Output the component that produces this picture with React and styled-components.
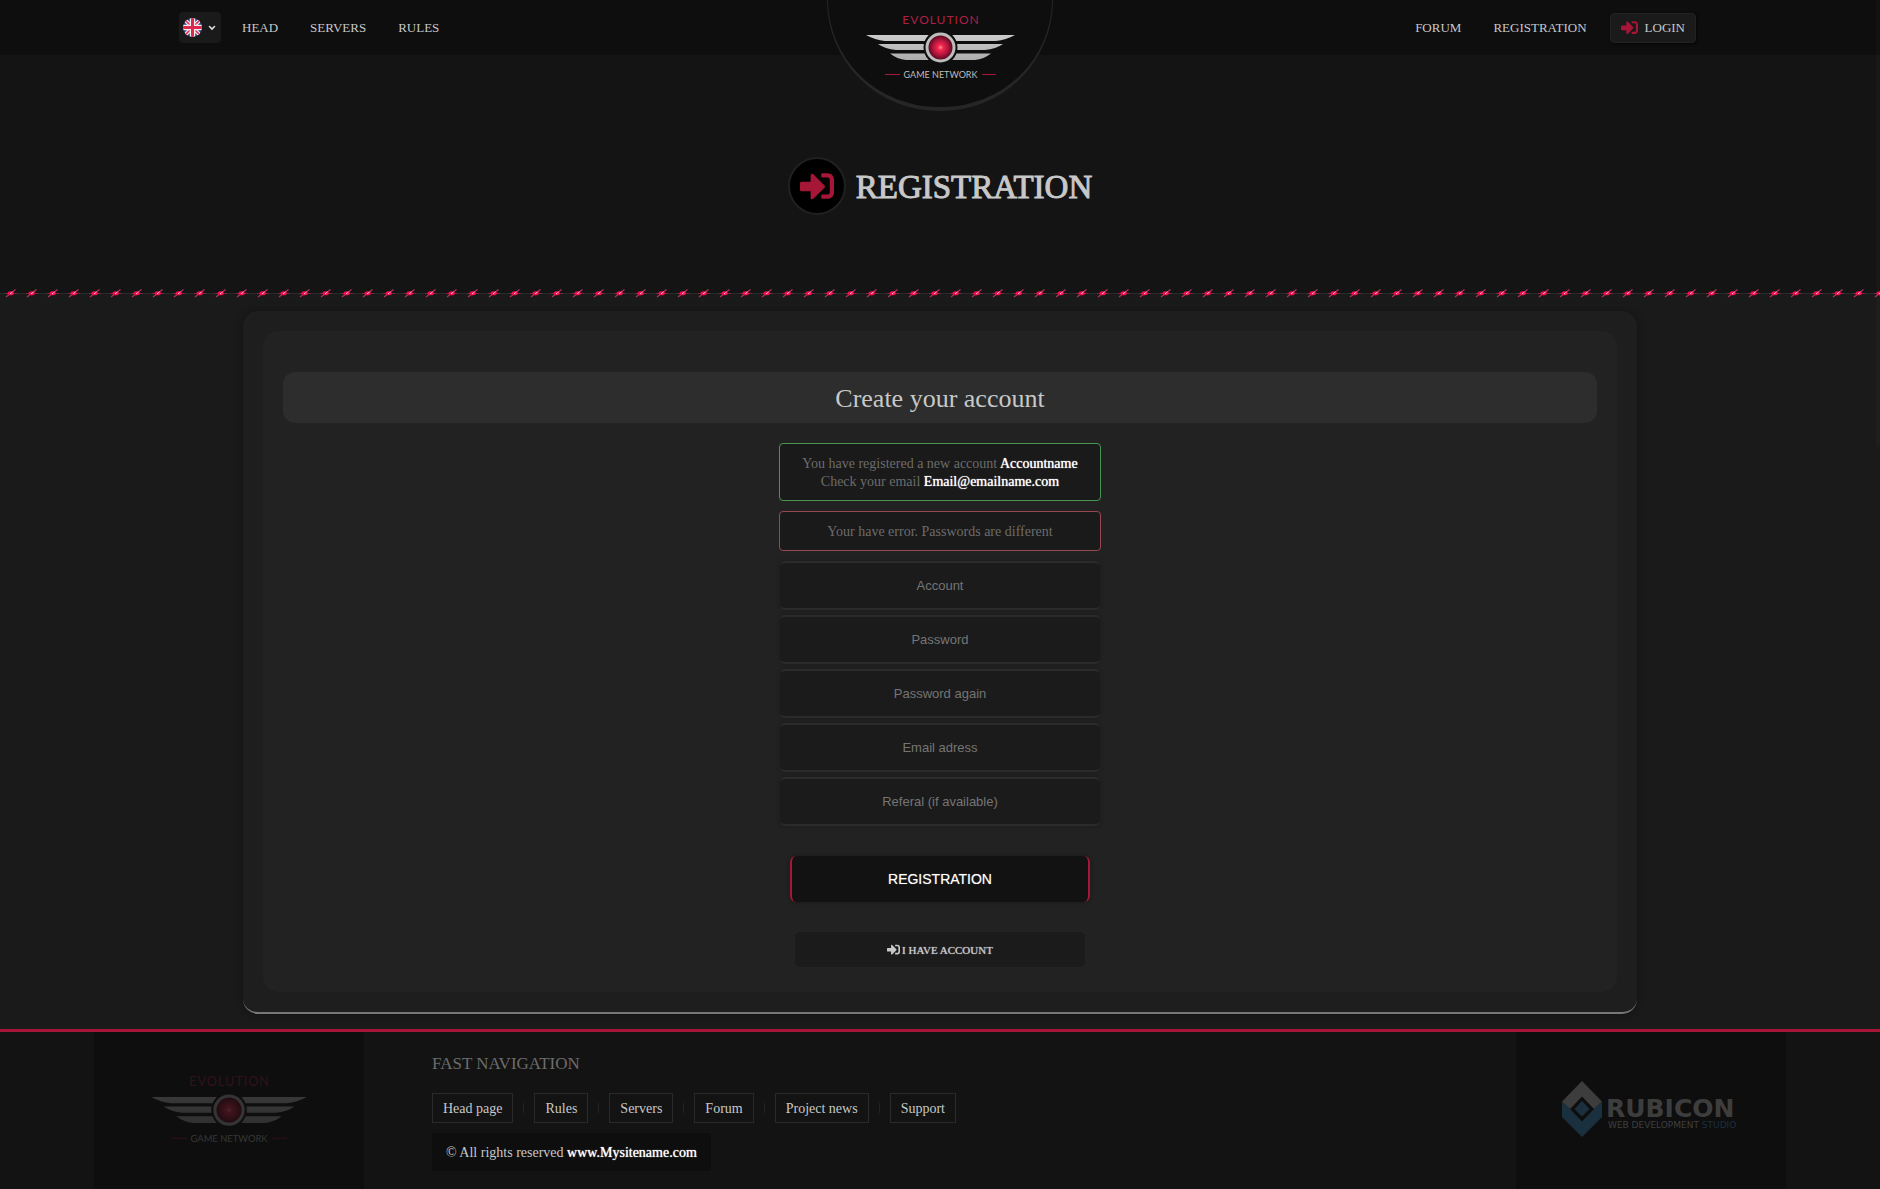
import { useState } from "react";
import styled, { createGlobalStyle } from "styled-components";
import { FaSignInAlt } from "react-icons/fa";

const accent = "#a61636";

const GlobalStyle = createGlobalStyle`
  * {
    box-sizing: border-box;
  }

  body {
    margin: 0;
    background: #1a1a1a;
    color: #c8c8c8;
    font-family: "Liberation Serif", "Times New Roman", serif;
    font-size: 14px;
    line-height: 18px;
  }

  #root {
    min-height: 100vh;
    display: flex;
  }

  a {
    color: inherit;
    text-decoration: none;
  }
`;

const Page = styled.div`
  flex: 1;
  display: flex;
  flex-direction: column;
`;

const Header = styled.header`
  position: relative;
  background: #141414;
  height: 293px;
  display: flex;
  flex-direction: column;
`;

const TopBar = styled.div`
  display: flex;
  justify-content: space-between;
  align-items: center;
  height: 55px;
  padding: 0 184px 0 179px;
  background: #0e0e0e;
`;

const Nav = styled.nav`
  display: flex;
  align-items: center;
  gap: 32px;
  font-size: 13px;
  text-transform: uppercase;

  a:hover {
    color: white;
  }
`;

const LangButton = styled.button`
  display: flex;
  align-items: center;
  gap: 6px;
  width: 42px;
  height: 31px;
  margin-right: -11px;
  padding: 0 4px;
  border: none;
  border-radius: 4px;
  background: #1a1a1a;
  cursor: pointer;
`;

const LoginLink = styled.a`
  display: flex;
  align-items: center;
  gap: 7px;
  height: 30px;
  margin-left: -9px;
  padding: 0 10px;
  border: 1px solid #222;
  border-radius: 4px;
  background: #1a1a1a;
  box-shadow: 1px 1px 3px rgba(0, 0, 0, 0.7);

  svg {
    color: ${accent};
    font-size: 17px;
  }
`;

const Emblem = styled.a`
  position: absolute;
  top: 0;
  left: 50%;
  transform: translateX(-50%);
  width: 226px;
  height: 111px;
  padding-top: 12px;
  display: flex;
  justify-content: center;
  align-items: flex-start;
  background: #0e0e0e;
  border: 1px solid #262626;
  border-width: 0 1px 4px;
  border-radius: 0 0 113px 113px;
`;

const PageTitle = styled.div`
  display: flex;
  justify-content: center;
  align-items: center;
  gap: 10px;
  padding-top: 102px;

  h1 {
    margin: 0;
    padding-top: 2px;
    font-size: 33px;
    line-height: 40px;
    font-weight: normal;
    text-transform: uppercase;
    -webkit-text-stroke: 1px currentColor;
  }
`;

const TitleIcon = styled.span`
  display: flex;
  justify-content: center;
  align-items: center;
  width: 58px;
  height: 58px;
  border: 2px solid #202020;
  border-radius: 50%;
  background: black;
  color: ${accent};
  font-size: 34px;
`;

const SparkLine = styled.svg`
  position: absolute;
  left: 0;
  bottom: -6px;
  width: 100%;
  height: 12px;
`;

const ScrollThumb = styled.div`
  position: absolute;
  top: 0;
  right: 0;
  width: 4px;
  height: 447px;
  background: rgba(255, 255, 255, 0.02);
  pointer-events: none;
`;

const Main = styled.main`
  flex: 1;
  padding: 18px 20px 15px;
`;

const Card = styled.section`
  max-width: 1394px;
  margin: 0 auto;
  padding: 20px;
  background: #1e1e1e;
  border-bottom: 2px solid #777;
  border-radius: 15px;
  box-shadow: 0 0 8px rgba(0, 0, 0, 0.3);
`;

const CardInner = styled.div`
  display: flex;
  flex-direction: column;
  align-items: center;
  padding: 41px 20px 25px;
  background: #222;
  border-radius: 15px;
`;

const CardTitle = styled.h2`
  width: 100%;
  margin: 0 0 20px;
  padding: 11px 10px 9px;
  background: #2d2d2d;
  border-radius: 12px;
  font-size: 26px;
  font-weight: normal;
  line-height: 31px;
  text-align: center;
`;

const Alert = styled.div`
  width: 322px;
  margin-bottom: 10px;
  padding: 11px 10px 9px;
  border: 1px solid ${(props) => (props.$error ? "#95494f" : "#489452")};
  border-radius: 4px;
  background: #1a1a1a;
  color: #6c6c6c;
  text-align: center;
`;

const Bright = styled.span`
  color: white;
  text-shadow: 0 0 1px white;
`;

const Form = styled.form`
  display: flex;
  flex-direction: column;
  align-items: center;
  gap: 5px;
`;

const Input = styled.input`
  width: 320px;
  height: 49px;
  padding: 0 10px;
  border: solid #2b2b2b;
  border-width: 2px 0;
  border-radius: 5px;
  background: #1b1b1b;
  box-shadow: 0 0 5px rgba(0, 0, 0, 0.2);
  color: #c8c8c8;
  font-family: "Liberation Sans", Arial, sans-serif;
  font-size: 13px;
  text-align: center;

  &::placeholder {
    color: #757575;
  }
`;

const SubmitButton = styled.button`
  width: 300px;
  height: 46px;
  margin: 25px 0;
  border: solid ${accent};
  border-width: 0 2px;
  border-radius: 6px;
  background: #121212;
  box-shadow: 0 0 4px rgba(0, 0, 0, 0.3);
  color: white;
  font-family: "Liberation Sans", Arial, sans-serif;
  font-size: 14px;
  text-transform: uppercase;
  text-shadow: 0 0 1px rgba(255, 255, 255, 0.5);
  cursor: pointer;
`;

const HaveAccount = styled.a`
  display: flex;
  justify-content: center;
  align-items: center;
  gap: 2px;
  width: 290px;
  height: 35px;
  border-radius: 5px;
  background: #1b1b1b;
  font-size: 11px;
  text-transform: uppercase;
  text-shadow: 0 0 1px #c8c8c8;

  svg {
    font-size: 13px;
  }
`;

const Footer = styled.footer`
  display: flex;
  min-height: 160px;
  padding: 0 5%;
  border-top: 3px solid ${accent};
  background: #131313;
`;

const FooterLogo = styled.a`
  display: flex;
  justify-content: center;
  align-items: center;
  width: 270px;
  padding: 0 2px 4px 0;
  background: #0e0e0e;

  svg {
    opacity: ${(props) => props.$fade};
  }
`;

const FooterContent = styled.div`
  flex: 1;
  padding: 22px 68px 18px;

  h3 {
    margin: 0 0 19px;
    color: #6c6c6c;
    font-size: 17px;
    font-weight: normal;
    line-height: 20px;
    text-transform: uppercase;
  }
`;

const FooterNav = styled.nav`
  display: flex;
  align-items: center;
  gap: 10px;
`;

const FooterLink = styled.a`
  height: 30px;
  padding: 6px 10px 4px;
  border: 1px solid #2a2a2a;

  &:hover {
    border-color: ${accent};
  }
`;

const Divider = styled.span`
  width: 1px;
  height: 10px;
  background: #222;
`;

const Copyright = styled.p`
  width: fit-content;
  margin: 10px 0 0;
  padding: 11px 14px 9px;
  background: #0e0e0e;
`;

function Flag() {
  return (
    <svg width="19" height="19" viewBox="0 0 38 38" aria-hidden="true">
      <clipPath id="flag-clip">
        <circle cx="19" cy="19" r="19" />
      </clipPath>
      <g clipPath="url(#flag-clip)">
        <rect width="38" height="38" fill="#2b3f80" />
        <path d="M0 0L38 38M38 0L0 38" stroke="#e4e4ec" strokeWidth="8" />
        <path d="M0 0L38 38M38 0L0 38" stroke="#e0284f" strokeWidth="3" />
        <path d="M19 0V38M0 19H38" stroke="#f0f0f0" strokeWidth="11" />
        <path d="M19 0V38M0 19H38" stroke="#e0284f" strokeWidth="6" />
      </g>
    </svg>
  );
}

function Chevron() {
  return (
    <svg width="8" height="6" viewBox="0 0 8 6" fill="none" aria-hidden="true">
      <path d="M1.5 1.5L4 4L6.5 1.5" stroke="#ddd" strokeWidth="1.6" strokeLinecap="round" />
    </svg>
  );
}

function EvolutionLogo({ id, width, height }) {
  const wing = (
    <>
      <path d="M1 23H64Q61 26 60 29H20Q10 28 1 23Z" />
      <path d="M13 32H59V38H31Q20 37 13 32Z" />
      <path d="M25 41.5H60Q61 45 64 48H41Q32 47 25 41.5Z" />
    </>
  );

  return (
    <svg width={width} height={height} viewBox="0 0 150 68" role="img" aria-label="Evolution Game Network">
      <defs>
        <radialGradient id={`${id}-core`}>
          <stop offset="0" stopColor="#ff8f98" />
          <stop offset="0.2" stopColor="#f52650" />
          <stop offset="0.6" stopColor="#a9143a" />
          <stop offset="1" stopColor="#3d0716" />
        </radialGradient>
        <linearGradient id={`${id}-wing`} x1="0" y1="22" x2="0" y2="48" gradientUnits="userSpaceOnUse">
          <stop offset="0" stopColor="#cdcdcd" />
          <stop offset="1" stopColor="#adadad" />
        </linearGradient>
      </defs>
      <text x="76" y="12" textAnchor="middle" fill="#b01f45" fontFamily="Lato, sans-serif" fontSize="12" letterSpacing="1">
        EVOLUTION
      </text>
      <g fill={`url(#${id}-wing)`}>
        {wing}
        <g transform="matrix(-1 0 0 1 151 0)">{wing}</g>
      </g>
      <circle cx="75.5" cy="35.5" r="17" fill="#0e0e0e" />
      <circle cx="75.5" cy="35.5" r="13.5" fill={`url(#${id}-core)`} stroke="#bdbdbd" strokeWidth="3" />
      <path d="M20 62.5H35M117 62.5H131" stroke={accent} />
      <text x="75.5" y="66" textAnchor="middle" fill="#bdbdbd" fontFamily="Lato, sans-serif" fontSize="9">
        GAME NETWORK
      </text>
    </svg>
  );
}

function RubiconLogo() {
  return (
    <svg width="176" height="56" viewBox="0 0 176 56" role="img" aria-label="Rubicon Web Development Studio">
      <path d="M20 0L40 20.5L32 28L20 15.5L8 28L0 20.5Z" fill="#aaa" />
      <path d="M0 20.5L8 28L20 40.5L32 28L40 20.5V36L20 56L0 36Z" fill="#3a7fae" />
      <path d="M20 20L27.5 28L20 35.5L12.5 28Z" fill="#3a7fae" />
      <text x="44" y="36" fill="#aaa" fontFamily="DejaVu Sans, sans-serif" fontSize="25" fontWeight="bold">
        RUBICON
      </text>
      <text x="46" y="47" fill="#aaa" fontFamily="DejaVu Sans, sans-serif" fontSize="9">
        WEB DEVELOPMENT <tspan fill="#3a7fae">STUDIO</tspan>
      </text>
    </svg>
  );
}

function Sparks() {
  return (
    <SparkLine aria-hidden="true">
      <defs>
        <pattern id="spark" width="21" height="12" patternUnits="userSpaceOnUse">
          <path d="M0 6.5H21" stroke="#2b2b2b" />
          <path d="M5 6.5H17" stroke="#7a2248" />
          <path d="M6 10L15.5 2.5" stroke="#b0315c" strokeWidth="1.2" />
          <ellipse cx="10.7" cy="6.3" rx="3.2" ry="2" fill="#f30f4b" />
          <path d="M10 7L12.5 5" stroke="#ffc4d4" />
        </pattern>
      </defs>
      <rect width="100%" height="12" fill="url(#spark)" />
    </SparkLine>
  );
}

const fields = [
  { name: "account", label: "Account", type: "text" },
  { name: "password", label: "Password", type: "password" },
  { name: "passwordAgain", label: "Password again", type: "password" },
  { name: "email", label: "Email adress", type: "email" },
  { name: "referal", label: "Referal (if available)", type: "text" },
];

const footerLinks = ["Head page", "Rules", "Servers", "Forum", "Project news", "Support"];

export default function App() {
  const [values, setValues] = useState({});

  const handleChange = (e) => {
    setValues({ ...values, [e.target.name]: e.target.value });
  };

  return (
    <>
      <GlobalStyle />
      <Page>
        <Header>
          <TopBar>
            <Nav>
              <LangButton type="button" aria-label="Language">
                <Flag />
                <Chevron />
              </LangButton>
              <a href="#head">Head</a>
              <a href="#servers">Servers</a>
              <a href="#rules">Rules</a>
            </Nav>
            <Nav>
              <a href="#forum">Forum</a>
              <a href="#registration">Registration</a>
              <LoginLink href="#login">
                <FaSignInAlt />
                Login
              </LoginLink>
            </Nav>
          </TopBar>
          <Emblem href="#head">
            <EvolutionLogo id="top" width={150} height={68} />
          </Emblem>
          <PageTitle>
            <TitleIcon>
              <FaSignInAlt />
            </TitleIcon>
            <h1>Registration</h1>
          </PageTitle>
          <Sparks />
        </Header>

        <Main>
          <Card>
            <CardInner>
              <CardTitle>Create your account</CardTitle>
              <Alert>
                You have registered a new account <Bright>Accountname</Bright>
                <br />
                Check your email <Bright>Email@emailname.com</Bright>
              </Alert>
              <Alert $error>Your have error. Passwords are different</Alert>
              <Form onSubmit={(e) => e.preventDefault()}>
                {fields.map((field) => (
                  <Input
                    key={field.name}
                    name={field.name}
                    type={field.type}
                    placeholder={field.label}
                    aria-label={field.label}
                    value={values[field.name] || ""}
                    onChange={handleChange}
                  />
                ))}
                <SubmitButton type="submit">Registration</SubmitButton>
                <HaveAccount href="#login">
                  <FaSignInAlt />
                  I have account
                </HaveAccount>
              </Form>
            </CardInner>
          </Card>
        </Main>

        <Footer>
          <FooterLogo href="#head" $fade={0.22}>
            <EvolutionLogo id="bottom" width={157} height={71} />
          </FooterLogo>
          <FooterContent>
            <h3>Fast navigation</h3>
            <FooterNav>
              {footerLinks.map((link, i) => [
                i > 0 && <Divider key={`${link}-divider`} />,
                <FooterLink key={link} href="#">
                  {link}
                </FooterLink>,
              ])}
            </FooterNav>
            <Copyright>
              © All rights reserved <Bright>www.Mysitename.com</Bright>
            </Copyright>
          </FooterContent>
          <FooterLogo href="#rubicon" $fade={0.3}>
            <RubiconLogo />
          </FooterLogo>
        </Footer>
        <ScrollThumb />
      </Page>
    </>
  );
}
